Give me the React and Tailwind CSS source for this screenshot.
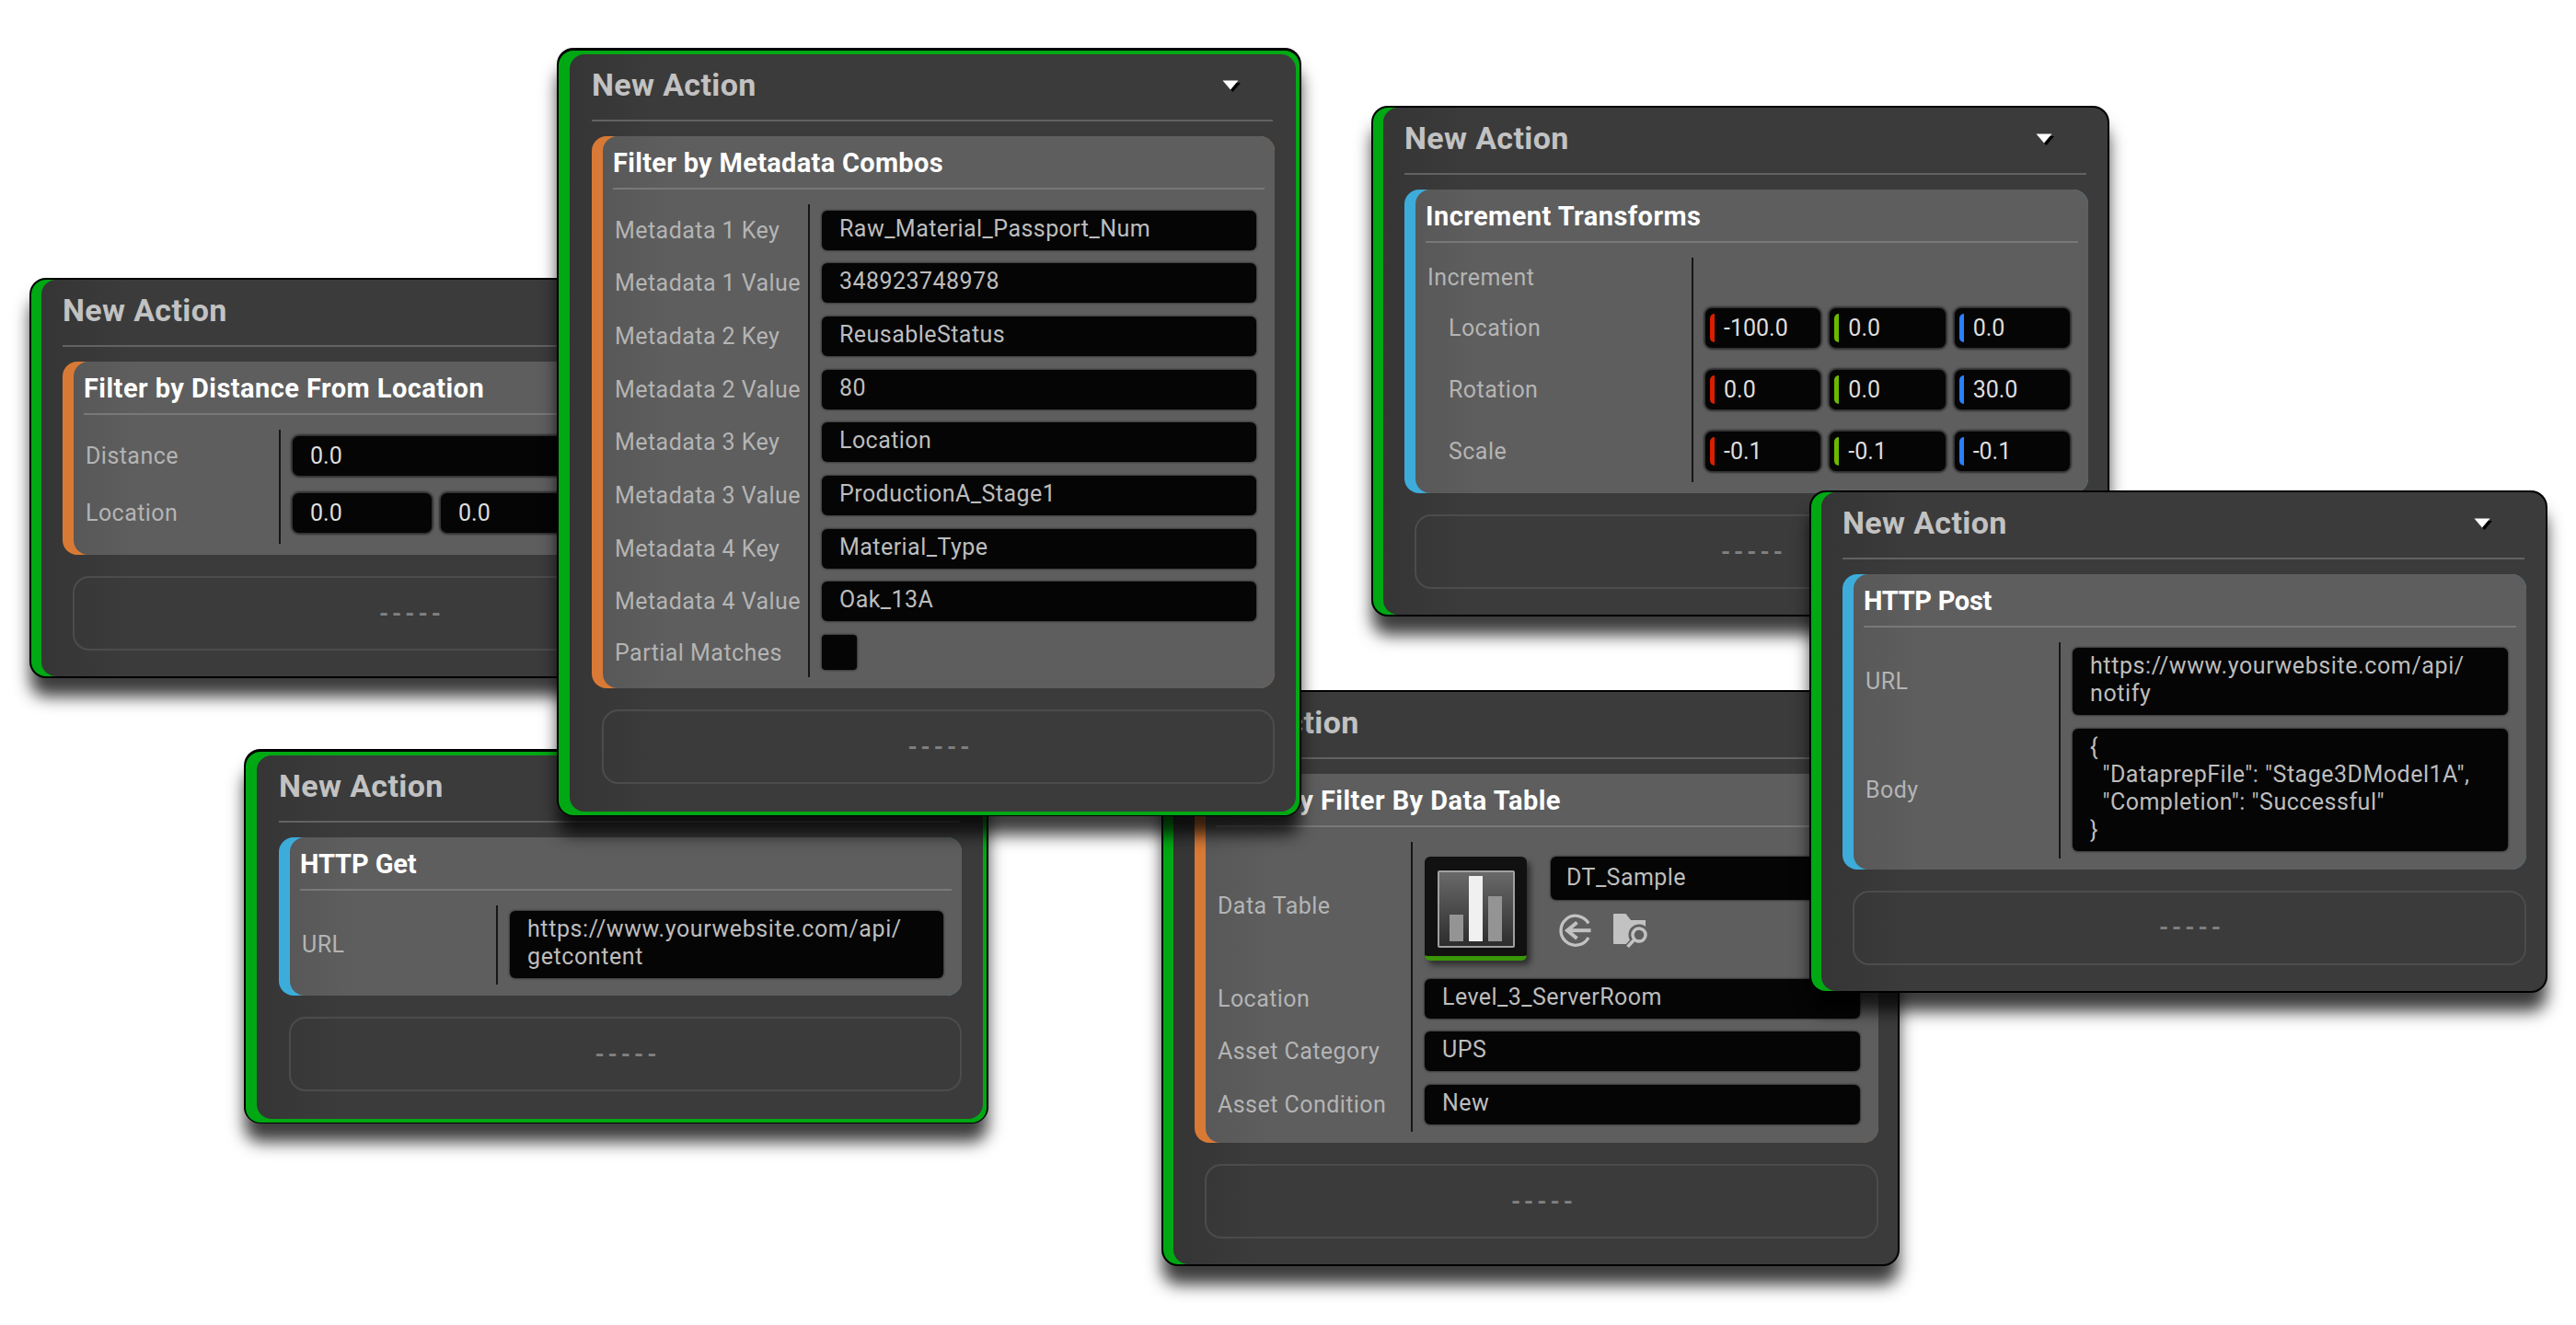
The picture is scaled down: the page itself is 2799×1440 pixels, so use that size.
const vector_colors = ["bg-[#dc1e00]", "bg-[#6cb800]", "bg-[#2a7fff]"];

const Dropdown_arrow = () => (
  <svg width="22" height="16" viewBox="0 0 22 16" aria-hidden="true">
    <path d="M3 3h17l-8.500 10z" fill="#000" />
    <path d="M0.500 0.500h17l-8.500 10z" fill="#fff" />
  </svg>
);

const Use_asset_icon = () => (
  <svg width="36" height="37" viewBox="0 0 36 37" fill="none" aria-hidden="true">
    <path d="M32 10.500A16 16 0 1 0 32 26" stroke="#c2c2c2" strokeWidth="3.300" />
    <path d="M34.500 18.200H8" stroke="#c2c2c2" strokeWidth="4" />
    <path d="M19.500 9.500L9 18.200l10.500 8.700" stroke="#c2c2c2" strokeWidth="4" />
  </svg>
);

const Browse_icon = () => (
  <svg width="38" height="37" viewBox="0 0 38 37" fill="none" aria-hidden="true">
    <path d="M1 0h12.500L19 7h16v7l-7 9-9 10H1q-1 0-1-1V1q0-1 1-1z" fill="#c2c2c2" />
    <circle cx="28" cy="23" r="11.500" fill="#5e5e5e" />
    <path d="M24 27l-10 11" stroke="#5e5e5e" strokeWidth="7" />
    <circle cx="28" cy="23" r="7" stroke="#c2c2c2" strokeWidth="3.500" />
    <path d="M23 28l-7.500 8" stroke="#c2c2c2" strokeWidth="3.500" />
  </svg>
);

const Data_table_icon = () => (
  <svg width="84" height="84" viewBox="0 0 84 84" aria-hidden="true">
    <defs>
      <linearGradient id="thumb" x1="0" y1="0" x2="0" y2="1">
        <stop offset="0" stopColor="#6a6a6a" />
        <stop offset="1" stopColor="#2c2c2c" />
      </linearGradient>
    </defs>
    <rect x="1" y="1" width="82" height="82" rx="1" fill="url(#thumb)" stroke="#a0a0a0" strokeWidth="2" />
    <rect x="13" y="48" width="15" height="29" fill="#949494" />
    <rect x="34" y="6" width="15" height="71" fill="#f0f0f0" />
    <rect x="55" y="28" width="15" height="49" fill="#949494" />
  </svg>
);

const Text_field = ({ children, spacing = "tracking-[0.45px]" }) => (
  <div
    className={`w-full rounded-[6px] bg-[#050505] px-[19px] pt-[5px] pb-[8px] text-[25px] leading-[30px] whitespace-pre text-[#bdbdbd] shadow-[0_0_2px_1px_#3a3a3a] ${spacing}`}
  >
    {children}
  </div>
);

const Number_field = ({ value, color }) => (
  <div className="flex h-[43px] min-w-0 flex-1 items-center rounded-[7px] bg-[#050505] text-[25px] leading-[30px] text-[#dedede] shadow-[0_0_2px_2px_#303030]">
    {color ? (
      <div className={`mr-[10px] ml-[5px] h-[31px] w-[5px] rounded-l-full ${color}`} />
    ) : (
      <div className="w-[19px]" />
    )}
    <span className="pt-[1px]">{value}</span>
  </div>
);

const Row = ({ label, label_width, pad = "pt-[6.5px] pb-[8.2px]", indent, children }) => (
  <div className="flex">
    <div
      className={`flex shrink-0 items-center border-r-2 border-[#161616] text-[25px] leading-[30px] tracking-[0.45px] whitespace-nowrap text-[#b4b4b4] ${label_width} ${pad} ${
        indent ? "pl-[36px]" : "pl-[13px]"
      }`}
    >
      <span className="pt-[1px]">{label}</span>
    </div>
    <div className={`flex min-w-0 flex-1 gap-[10px] pr-[20px] pl-[13px] ${pad}`}>
      {children}
    </div>
  </div>
);

const Card = ({ place, selected, arrow, title, title_spacing = "tracking-[0.45px]", accent, children }) => (
  <div
    className={`absolute rounded-[18px] bg-black shadow-[0_21px_18px_-1px_rgba(0,0,0,0.77)] ${place} ${
      selected ? "w-[809px] px-[2px] pt-[3px] pb-[1px]" : "w-[802px] p-[2px]"
    }`}
  >
    <div
      className={`rounded-[16px] ${
        selected
          ? "bg-[#00a814] pt-[4px] pr-[4px] pb-[4px] pl-[12px]"
          : "bg-[linear-gradient(to_right,#00a814_40px,#000_40px)] pl-[11px]"
      }`}
    >
      <div
        className={`rounded-[16px] bg-[linear-gradient(to_right,#353535,#3b3b3b_90px)] ${
          selected ? "pr-[23px] pb-[30px] pl-[24px]" : "pr-[21px] pb-[28px] pl-[23px]"
        }`}
      >
        <div className="mr-[2px] flex h-[73px] justify-between border-b-2 border-[#626262]">
          <div className="pt-[13px] text-[34px] leading-[40px] font-bold tracking-[0.35px] text-[#c2c2c2]">
            New Action
          </div>
          {arrow && (
            <div className="pt-[28px] pr-[33px]">
              <Dropdown_arrow />
            </div>
          )}
        </div>

        <div className={`mt-[16px] rounded-[16px] pl-[12px] ${accent}`}>
          <div className="rounded-[16px] bg-[linear-gradient(to_right,#585858,#5e5e5e_70px)] pb-[12px]">
            <div
              className={`mr-[11px] ml-[11px] h-[58px] border-b-2 border-[#787878] pt-[11px] text-[29px] leading-[36px] font-bold whitespace-nowrap text-white ${title_spacing}`}
            >
              {title}
            </div>
            <div className="pt-[16px]">{children}</div>
          </div>
        </div>

        <div className="mt-[23px] ml-[11px] flex h-[81px] items-center justify-center rounded-[18px] border-2 border-[#4c4c4c] pl-[5px] text-[26px] leading-[30px] font-bold tracking-[4px] text-[#808080]">
          -----
        </div>
      </div>
    </div>
  </div>
);

const metadata = [
  ["Metadata 1 Key", "Raw_Material_Passport_Num"],
  ["Metadata 1 Value", "348923748978"],
  ["Metadata 2 Key", "ReusableStatus"],
  ["Metadata 2 Value", "80"],
  ["Metadata 3 Key", "Location"],
  ["Metadata 3 Value", "ProductionA_Stage1"],
  ["Metadata 4 Key", "Material_Type"],
  ["Metadata 4 Value", "Oak_13A"],
];

const transforms = [
  ["Location", ["-100.0", "0.0", "0.0"]],
  ["Rotation", ["0.0", "0.0", "30.0"]],
  ["Scale", ["-0.1", "-0.1", "-0.1"]],
];

const body_text = `{
  "DataprepFile": "Stage3DModel1A",
  "Completion": "Successful"
}`;

const orange = "bg-[#d87a36]";
const blue = "bg-[#3dacdb]";

const App = () => {
  return (
    <div className="relative h-[1440px] w-[2799px] overflow-hidden bg-white font-[Roboto,sans-serif]">
      <Card place="left-[32px] top-[302px]" title="Filter by Distance From Location" accent={orange}>
        <Row label="Distance" label_width="w-[225px]" pad="pt-[6.500px] pb-[13px]">
          <Number_field value="0.0" />
        </Row>
        <Row label="Location" label_width="w-[225px]" pad="pt-[6.500px] pb-[12px]">
          <Number_field value="0.0" />
          <Number_field value="0.0" />
          <Number_field />
        </Row>
      </Card>

      <Card
        place="left-[265px] top-[814px]"
        selected
        title="HTTP Get"
        title_spacing="tracking-[-0.1px]"
        accent={blue}
      >
        <Row label="URL" label_width="w-[226px]" pad="pt-[6px] pb-[7px]">
          <Text_field spacing="tracking-[0.600px]">
            {"https://www.yourwebsite.com/api/\ngetcontent"}
          </Text_field>
        </Row>
      </Card>

      <Card place="left-[1262px] top-[750px]" title="Country Filter By Data Table" accent={orange}>
        <Row
          label={<span className="block pb-[6px]">Data Table</span>}
          label_width="w-[225px]"
          pad="pt-[16px] pb-[13px]"
        >
          <div className="flex h-[113px] w-[111px] shrink-0 flex-col items-center justify-between overflow-hidden rounded-[6px] border-b-5 border-[#3a9608] bg-[#111] pt-[15px] shadow-[4px_5px_6px_rgba(0,0,0,0.5)]">
            <Data_table_icon />
          </div>
          <div className="ml-[16px] flex-1">
            <div className="h-[47px] rounded-[6px] bg-[#050505] px-[17px] pt-[8px] text-[25px] leading-[30px] tracking-[0.45px] text-[#bdbdbd] shadow-[0_0_2px_1px_#3a3a3a]">
              DT_Sample
            </div>
            <div className="flex gap-[23px] pt-[15px] pl-[9px]">
              <Use_asset_icon />
              <Browse_icon />
            </div>
          </div>
        </Row>
        <Row label="Location" label_width="w-[225px]">
          <Text_field>Level_3_ServerRoom</Text_field>
        </Row>
        <Row label="Asset Category" label_width="w-[225px]">
          <Text_field>UPS</Text_field>
        </Row>
        <Row label="Asset Condition" label_width="w-[225px]">
          <Text_field>New</Text_field>
        </Row>
      </Card>

      <Card place="left-[1490px] top-[115px]" arrow title="Increment Transforms" accent={blue}>
        <Row label="Increment" label_width="w-[302px]" pad="pt-[6px] pb-[6px]" />
        {transforms.map(([label, values]) => (
          <Row key={label} label={label} label_width="w-[302px]" pad="pt-[12px] pb-[12px]" indent>
            {values.map((value, i) => (
              <Number_field key={i} value={value} color={vector_colors[i]} />
            ))}
          </Row>
        ))}
      </Card>

      <Card
        place="left-[1966px] top-[533px]"
        arrow
        title="HTTP Post"
        title_spacing="tracking-[-0.3px]"
        accent={blue}
      >
        <Row label="URL" label_width="w-[225px]" pad="pt-[6px] pb-[8px]">
          <Text_field spacing="tracking-[0.600px]">
            {"https://www.yourwebsite.com/api/\nnotify"}
          </Text_field>
        </Row>
        <Row label="Body" label_width="w-[225px]">
          <Text_field spacing="tracking-[0.500px]">{body_text}</Text_field>
        </Row>
      </Card>

      <Card
        place="left-[605px] top-[52px]"
        selected
        arrow
        title="Filter by Metadata Combos"
        title_spacing="tracking-[0.300px]"
        accent={orange}
      >
        {metadata.map(([label, value]) => (
          <Row key={label} label={label} label_width="w-[225px]">
            <Text_field>{value}</Text_field>
          </Row>
        ))}
        <Row label="Partial Matches" label_width="w-[225px]">
          <div className="h-[38px] w-[38px] rounded-[4px] bg-[#050505] shadow-[0_0_2px_1px_#3a3a3a]" />
        </Row>
      </Card>
    </div>
  );
};

export default App;
